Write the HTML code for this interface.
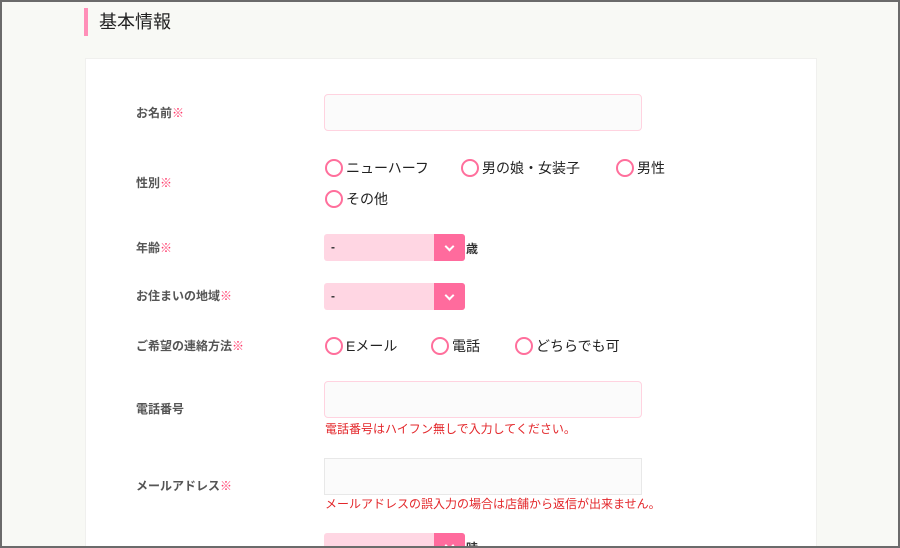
<!DOCTYPE html>
<html><head><meta charset="utf-8"><style>
*{margin:0;padding:0;box-sizing:border-box}
html,body{width:900px;height:548px;overflow:hidden}
body{background:#f8f9f5;font-family:"Liberation Sans","Noto Sans CJK JP",sans-serif;position:relative;color:#333}
.frame{position:absolute;left:0;top:0;width:900px;height:548px;border:2px solid #6b6b6b;z-index:10;pointer-events:none}
.bar{position:absolute;left:84px;top:8px;width:4px;height:28px;background:#ff8fb8}
.h{position:absolute;left:99px;top:10px;font-size:18px;line-height:24px;color:#222}
.panel{position:absolute;left:85px;top:58px;width:732px;height:500px;background:#fff;border:1px solid #f0f0ee}
.lab{position:absolute;left:136px;font-size:12px;font-weight:bold;color:#555;line-height:16px}
.lab i{font-style:normal;color:#ff3b6b}
.inp{position:absolute;left:324px;width:318px;height:37px;background:#fbfbfb;border:1px solid #ffd3e0;border-radius:4px}
.inp.g{border-color:#e8e8e8;border-radius:0}
.r{position:absolute;font-size:14px;line-height:18px;color:#222;display:flex;align-items:center}
.r span{width:18px;height:18px;border:2px solid #ff6f9c;border-radius:50%;margin-right:3px;display:inline-block}
.sel{position:absolute;left:324px;width:141px;height:27px;background:#ffd6e3;border-radius:3px;font-size:12px;font-weight:bold;line-height:27px;padding-left:7px}
.sel b{position:absolute;right:0;top:0;width:31px;height:27px;background:#ff6b9d;border-radius:0 3px 3px 0}
.sel b:after{content:"";position:absolute;left:12px;top:9px;width:5px;height:5px;border-right:2px solid #fff;border-bottom:2px solid #fff;transform:rotate(45deg)}
.unit{position:absolute;left:466px;font-size:12px;font-weight:bold}
.note{position:absolute;left:325px;font-size:12px;color:#e3272b;line-height:16px}
</style></head><body>
<div class="frame"></div>
<div class="bar"></div><div class="h">基本情報</div>
<div class="panel"></div>
<div class="lab" style="top:105px">お名前<i>※</i></div>
<div class="inp" style="top:94px"></div>
<div class="lab" style="top:175px">性別<i>※</i></div>
<div class="r" style="left:325px;top:159px"><span></span>ニューハーフ</div>
<div class="r" style="left:461px;top:159px"><span></span>男の娘・女装子</div>
<div class="r" style="left:616px;top:159px"><span></span>男性</div>
<div class="r" style="left:325px;top:190px"><span></span>その他</div>
<div class="lab" style="top:240px">年齢<i>※</i></div>
<div class="sel" style="top:234px">-<b></b></div><div class="unit" style="top:240px">歳</div>
<div class="lab" style="top:288px">お住まいの地域<i>※</i></div>
<div class="sel" style="top:283px">-<b></b></div>
<div class="lab" style="top:338px">ご希望の連絡方法<i>※</i></div>
<div class="r" style="left:325px;top:337px"><span></span>Eメール</div>
<div class="r" style="left:431px;top:337px"><span></span>電話</div>
<div class="r" style="left:515px;top:337px"><span></span>どちらでも可</div>
<div class="lab" style="top:401px">電話番号</div>
<div class="inp" style="top:381px"></div>
<div class="note" style="top:421px">電話番号はハイフン無しで入力してください。</div>
<div class="lab" style="top:478px">メールアドレス<i>※</i></div>
<div class="inp g" style="top:458px"></div>
<div class="note" style="top:496px">メールアドレスの誤入力の場合は店舗から返信が出来ません。</div>
<div class="sel" style="top:533px"><b></b></div><div class="unit" style="top:539px">時</div>
</body></html>
